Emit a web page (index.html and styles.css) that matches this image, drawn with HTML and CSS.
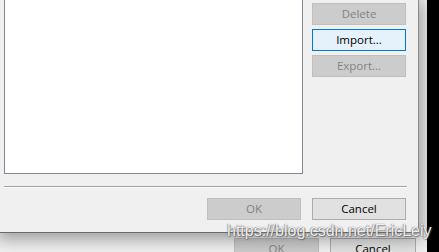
FILE: index.html
```html
<!DOCTYPE html>
<html>
<head>
<meta charset="utf-8">
<link rel="stylesheet" href="styles.css">
</head>
<body>
<div class="desk">
  <div class="backwin">
    <div class="backbtns">
      <button class="btn disabled back-ok">OK</button>
      <button class="btn back-cancel">Cancel</button>
    </div>
  </div>
  <div class="dialog">
    <div class="main">
      <div class="listbox"></div>
      <div class="side">
        <button class="btn disabled">Delete</button>
        <button class="btn focus">Import...</button>
        <button class="btn disabled">Export...</button>
      </div>
    </div>
    <div class="sep"></div>
    <div class="footer">
      <button class="btn disabled">OK</button>
      <button class="btn">Cancel</button>
    </div>
  </div>
  <div class="watermark">https://blog.csdn.net/EricLeiy</div>
</div>
</body>
</html>
```
FILE: styles.css
```css
html, body {
  margin: 0;
  padding: 0;
}
body {
  width: 439px;
  height: 252px;
  overflow: hidden;
  background: #000;
  font-family: "Segoe UI", "Open Sans", "Noto Sans", sans-serif;
  font-size: 11.5px;
}
.desk {
  position: relative;
  width: 439px;
  height: 252px;
}
.backwin {
  position: absolute;
  left: 0;
  top: 0;
  width: 427px;
  height: 252px;
  background: #f0f0f0;
}
.backbtns {
  display: flex;
  justify-content: flex-end;
  gap: 11px;
  padding-top: 238px;
  padding-right: 11px;
}
.btn {
  box-sizing: border-box;
  width: 94px;
  height: 22px;
  margin: 0;
  padding: 0 0 1px;
  font-family: inherit;
  font-size: 11.5px;
  color: #000;
  background: #e1e1e1;
  border: 1px solid #adadad;
  border-radius: 0;
  line-height: 18px;
  text-align: center;
}
.btn.disabled {
  background: #cccccc;
  border-color: #bfbfbf;
  color: #838383;
}
.btn.focus {
  background: #e5f1fb;
  border-color: #0078d7;
}
.back-ok { width: 85px; }
.back-cancel { width: 86px; }
.dialog {
  position: absolute;
  left: 0;
  top: 0;
  box-sizing: border-box;
  width: 419px;
  height: 233px;
  padding: 0 11px 12px 4px;
  background: #f0f0f0;
  border-right: 1px solid #8a8a8a;
  border-bottom: 1px solid #6a6a6a;
  box-shadow: 0 3px 16px 3px rgba(0, 0, 0, 0.36);
  display: flex;
  flex-direction: column;
}
.main {
  display: flex;
  gap: 9px;
}
.listbox {
  box-sizing: border-box;
  width: 299px;
  height: 174px;
  background: #fff;
  border: 1px solid #828790;
  border-top: none;
}
.side {
  display: flex;
  flex-direction: column;
  gap: 4px;
  padding-top: 3px;
}
.sep {
  margin-top: 12px;
  height: 1px;
  background: #a0a0a0;
  border-bottom: 1px solid #fff;
}
.footer {
  margin-top: 10px;
  display: flex;
  justify-content: flex-end;
  gap: 11px;
  padding-right: 1px;
}
.watermark {
  position: absolute;
  left: 227px;
  top: 221px;
  font-family: "Liberation Sans", Arial, sans-serif;
  font-size: 16px;
  line-height: 20px;
  color: rgba(255, 255, 255, 0.9);
  text-shadow: 0 0 1px rgba(80, 80, 80, 0.8), 1px 1px 1px rgba(80, 80, 80, 0.6), -1px 0 1px rgba(120, 120, 120, 0.4);
  white-space: nowrap;
}
```
